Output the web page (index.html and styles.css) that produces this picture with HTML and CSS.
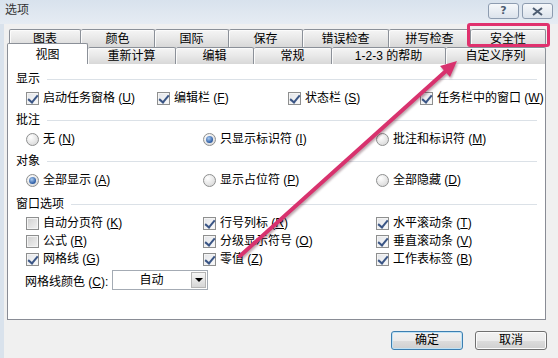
FILE: index.html
```html
<!DOCTYPE html>
<html lang="zh-CN">
<head>
    <meta charset="UTF-8">
    <meta name="viewport" content="width=device-width, initial-scale=1.0">
    <title>选项</title>
    <link rel="stylesheet" href="styles.css">
</head>
<body>
    <div class="dialog">
        <div class="titlebar">
            <span class="title">选项</span>
            <div class="caption_btns">
                <span class="caption_btn help">?</span>
                <span class="caption_btn close">
                    <svg width="11" height="9" viewBox="0 0 11 9">
                        <path d="M1 1 L10 8 M10 1 L1 8" stroke="#4e5d72" stroke-width="2" fill="none"/>
                    </svg>
                </span>
            </div>
        </div>

        <div class="tabs">
            <div class="tab_row back">
                <span class="tab">图表</span>
                <span class="tab">颜色</span>
                <span class="tab">国际</span>
                <span class="tab">保存</span>
                <span class="tab">错误检查</span>
                <span class="tab">拼写检查</span>
                <span class="tab">安全性</span>
            </div>
            <div class="tab_row front">
                <span class="tab selected">视图</span>
                <span class="tab">重新计算</span>
                <span class="tab">编辑</span>
                <span class="tab">常规</span>
                <span class="tab">1-2-3 的帮助</span>
                <span class="tab">自定义序列</span>
            </div>
        </div>

        <div class="panel">
            <div class="section">
                <div class="legend">显示</div>
                <div class="row cols4">
                    <label class="opt"><span class="box checked"></span><span>启动任务窗格 (<u>U</u>)</span></label>
                    <label class="opt"><span class="box checked"></span><span>编辑栏 (<u>F</u>)</span></label>
                    <label class="opt"><span class="box checked"></span><span>状态栏 (<u>S</u>)</span></label>
                    <label class="opt"><span class="box checked"></span><span>任务栏中的窗口 (<u>W</u>)</span></label>
                </div>
            </div>

            <div class="section">
                <div class="legend">批注</div>
                <div class="row cols3">
                    <label class="opt"><span class="radio"></span><span>无 (<u>N</u>)</span></label>
                    <label class="opt"><span class="radio checked"></span><span>只显示标识符 (<u>I</u>)</span></label>
                    <label class="opt"><span class="radio"></span><span>批注和标识符 (<u>M</u>)</span></label>
                </div>
            </div>

            <div class="section">
                <div class="legend">对象</div>
                <div class="row cols3">
                    <label class="opt"><span class="radio checked"></span><span>全部显示 (<u>A</u>)</span></label>
                    <label class="opt"><span class="radio"></span><span>显示占位符 (<u>P</u>)</span></label>
                    <label class="opt"><span class="radio"></span><span>全部隐藏 (<u>D</u>)</span></label>
                </div>
            </div>

            <div class="section window">
                <div class="legend">窗口选项</div>
                <div class="row cols3">
                    <label class="opt"><span class="box"></span><span>自动分页符 (<u>K</u>)</span></label>
                    <label class="opt"><span class="box checked"></span><span>行号列标 (<u>R</u>)</span></label>
                    <label class="opt"><span class="box checked"></span><span>水平滚动条 (<u>T</u>)</span></label>
                </div>
                <div class="row cols3">
                    <label class="opt"><span class="box"></span><span>公式 (<u>R</u>)</span></label>
                    <label class="opt"><span class="box checked"></span><span>分级显示符号 (<u>O</u>)</span></label>
                    <label class="opt"><span class="box checked"></span><span>垂直滚动条 (<u>V</u>)</span></label>
                </div>
                <div class="row cols3">
                    <label class="opt"><span class="box checked"></span><span>网格线 (<u>G</u>)</span></label>
                    <label class="opt"><span class="box checked"></span><span>零值 (<u>Z</u>)</span></label>
                    <label class="opt"><span class="box checked"></span><span>工作表标签 (<u>B</u>)</span></label>
                </div>
                <div class="color_row">
                    <span class="color_label">网格线颜色 (<u>C</u>):</span>
                    <div class="select">
                        <span class="select_value">自动</span>
                        <span class="select_btn"></span>
                    </div>
                </div>
            </div>
        </div>

        <div class="footer">
            <button class="btn default">确定</button>
            <button class="btn">取消</button>
        </div>

        <!-- annotation drawn over the dialog -->
        <div class="highlight"></div>
        <svg class="arrow" width="558" height="358" viewBox="0 0 558 358">
            <line x1="240" y1="256" x2="447" y2="70" stroke="#d8326e" stroke-width="4" stroke-linecap="round"/>
            <polygon points="457,61 450,77 440,66" fill="#d8326e"/>
        </svg>
    </div>
</body>
</html>
```

FILE: styles.css
```css
* {
    margin: 0;
    padding: 0;
    box-sizing: border-box;
}
body {
    width: 558px;
    height: 358px;
    overflow: hidden;
    font-family: "Liberation Sans", "Noto Sans CJK SC", sans-serif;
    font-size: 12px;
    color: #000;
    background: #f0f0f0;
}
.dialog {
    position: relative;
    width: 558px;
    height: 358px;
    background: linear-gradient(to right, #d9e2ec 0, #d9e2ec 4px, #f0f0f0 4px);
}
.titlebar {
    height: 24px;
    display: flex;
    justify-content: space-between;
    align-items: flex-start;
    padding: 2px 5px 0 5px;
    background: linear-gradient(#d8e2ed, #e6ecf3);
}
.title {
    color: #333;
    line-height: 16px;
}
.caption_btns {
    display: flex;
    gap: 3px;
    padding-top: 1px;
}
.caption_btn {
    width: 31px;
    height: 16px;
    display: flex;
    align-items: center;
    justify-content: center;
    border: 1px solid #8d9cb0;
    border-radius: 3px;
    background: linear-gradient(#f6f8fb, #dce3ec);
    color: #4e5d72;
    font-family: "DejaVu Sans", sans-serif;
    font-size: 11px;
    font-weight: bold;
    line-height: 14px;
}
.tabs {
    padding-top: 5px;
}
.tab_row {
    display: grid;
}
.tab_row.back {
    margin-left: 9px;
    height: 18px;
    grid-template-columns: 72px 74px 74px 74px 86px 82px 75px;
}
.tab_row.front {
    margin-left: 7px;
    height: 16px;
    grid-template-columns: 81px 88px 78px 78px 114px 100px;
}
.tab {
    display: flex;
    align-items: center;
    justify-content: center;
    border: 1px solid #8b9098;
    border-left: none;
    border-bottom: none;
    border-radius: 2px 2px 0 0;
    background: linear-gradient(#f5f5f5, #e8e8e8 50%, #d8d8d8);
    box-shadow: inset 1px 1px 0 #fbfbfb;
    line-height: 12px;
    white-space: pre;
}
.tab:first-child {
    border-left: 1px solid #8b9098;
}
.tab.selected {
    position: relative;
    z-index: 1;
    height: 21px;
    margin-top: -4px;
    background: #fff;
    box-shadow: none;
    padding-top: 1px;
}
.panel {
    margin-left: 7px;
    width: 539px;
    height: 257px;
    border: 1px solid #898c95;
    background: #fff;
    padding: 7px 8px 0 8px;
}
.section + .section {
    margin-top: 5px;
}
.section.window {
    margin-top: 7px;
}
.legend {
    display: flex;
    align-items: center;
    height: 16px;
    margin-bottom: 2px;
    line-height: 16px;
}
.legend::after {
    content: "";
    flex: 1;
    margin-left: 7px;
    border-top: 1px solid #dbe1e7;
}
.row {
    display: grid;
    height: 18px;
    padding-left: 10px;
    align-items: center;
}
.row.cols4 {
    grid-template-columns: 131px 131px 132px auto;
}
.row.cols3 {
    grid-template-columns: 177px 173px auto;
}
.opt {
    display: flex;
    align-items: center;
    gap: 4px;
    white-space: pre;
    line-height: 18px;
}
.box {
    position: relative;
    flex: none;
    width: 13px;
    height: 13px;
    border: 1px solid #8e8f8f;
    background: linear-gradient(135deg, #cfcfcf, #f2f2f2);
    box-shadow: inset 0 0 0 1px #f4f4f4;
}
.box.checked {
    background: linear-gradient(135deg, #e2e4e8, #fbfbfb);
}
.box.checked::after {
    content: "";
    position: absolute;
    left: 3px;
    top: 0px;
    width: 4px;
    height: 8px;
    border-right: 2px solid #3a5585;
    border-bottom: 2px solid #3a5585;
    transform: rotate(40deg);
}
.radio {
    position: relative;
    flex: none;
    width: 13px;
    height: 13px;
    border-radius: 50%;
    border: 1px solid #8e8f8f;
    background: radial-gradient(circle at 35% 30%, #ffffff, #d2d2d2);
}
.radio.checked::after {
    content: "";
    position: absolute;
    left: 2px;
    top: 2px;
    width: 7px;
    height: 7px;
    border-radius: 50%;
    background: radial-gradient(circle at 40% 35%, #a9cbf2, #2a5aa2 70%);
}
.color_row {
    display: flex;
    align-items: center;
    height: 20px;
    margin-top: 2px;
    padding-left: 9px;
}
.color_label {
    width: 87px;
    white-space: pre;
}
.select {
    display: flex;
    width: 96px;
    height: 20px;
    border: 1px solid #a4abb4;
    background: #fff;
}
.select_value {
    flex: 1;
    text-align: center;
    line-height: 18px;
}
.select_btn {
    width: 15px;
    margin: 1px;
    display: flex;
    align-items: center;
    justify-content: center;
    border: 1px solid #b5b5b5;
    background: linear-gradient(#f6f6f6, #d6d6d6);
}
.select_btn::after {
    content: "";
    border-left: 4px solid transparent;
    border-right: 4px solid transparent;
    border-top: 4px solid #000;
}
.footer {
    display: flex;
    justify-content: flex-end;
    gap: 12px;
    margin-top: 11px;
    padding-right: 11px;
}
.btn {
    width: 72px;
    height: 19px;
    font: inherit;
    line-height: 17px;
    color: #000;
    border: 1px solid #707070;
    border-radius: 3px;
    background: linear-gradient(#f2f2f2, #ebebeb 50%, #dddddd 50%, #cfcfcf);
    box-shadow: inset 0 0 0 1px #fbfbfb;
}
.btn.default {
    border-color: #3c7fb1;
    box-shadow: inset 0 0 0 1px #bfe2f5;
}
.highlight {
    position: absolute;
    left: 467px;
    top: 23px;
    width: 83px;
    height: 24px;
    border: 3px solid #e0316e;
    border-radius: 3px;
}
.arrow {
    position: absolute;
    left: 0;
    top: 0;
    pointer-events: none;
    filter: drop-shadow(1px 2px 1px rgba(60, 0, 20, 0.35));
}
```
